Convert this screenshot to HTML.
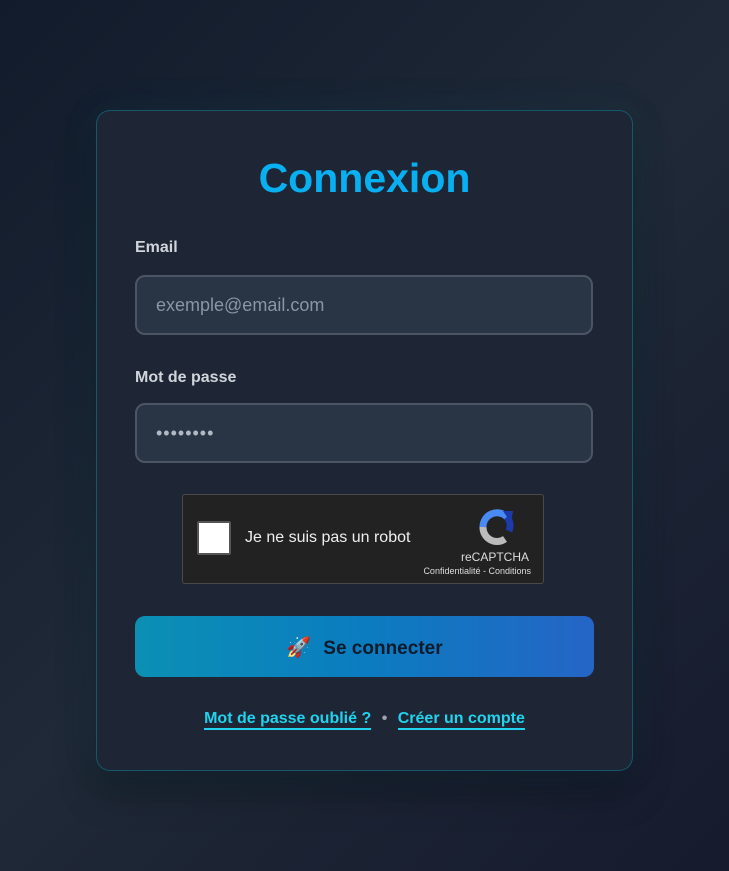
<!DOCTYPE html>
<html><head><meta charset="utf-8"><style>
*{box-sizing:border-box;margin:0;padding:0}
html,body{width:729px;height:871px;overflow:hidden}
body{background:linear-gradient(135deg,#111b2b 0%,#1f2937 50%,#161b2e 100%);font-family:"Liberation Sans",sans-serif;position:relative}
.card{position:absolute;left:96px;top:110px;width:537px;height:661px;border:1px solid rgba(6,182,212,.35);border-radius:14px;background:#1e2635;box-shadow:0 0 40px rgba(6,182,212,.08),0 20px 40px rgba(0,0,0,.3)}
h1{position:absolute;left:0;right:0;top:44px;text-align:center;color:#08b0f2;font-size:41px;font-weight:bold;letter-spacing:0}
.lab{position:absolute;left:38px;color:#d1d5db;font-size:16px;font-weight:bold}
.inp{position:absolute;left:38px;width:458px;height:60px;border:2px solid #4b5563;border-radius:10px;background:#293444;color:#8b95a3;font-size:18px;padding-left:19px;line-height:56px}
.cap{position:absolute;left:85px;top:383px;width:362px;height:90px;background:#222;border:1px solid #4a4a4a;border-radius:3px}
.cb{position:absolute;left:14px;top:26px;width:34px;height:34px;background:#fff;border:2px solid #555;border-radius:2px}
.ct{position:absolute;left:62px;top:34px;color:#eee;font-size:16px}
.btn{position:absolute;left:38px;top:505px;width:459px;height:61px;border-radius:10px;background:linear-gradient(90deg,#0b90b4,#0b7cc0 50%,#2565c6);color:#0f1a2a;font-size:19px;font-weight:bold;text-align:center;line-height:64px}
.links{position:absolute;left:0;right:0;top:599px;text-align:center;color:#22d3ee;font-size:16px;font-weight:bold}
.links span.l{border-bottom:2px solid #22d3ee;padding-bottom:1px}
</style></head><body>
<div class="card">
<h1>Connexion</h1>
<div class="lab" style="top:128px">Email</div>
<div class="inp" style="top:164px">exemple@email.com</div>
<div class="lab" style="top:258px">Mot de passe</div>
<div class="inp" style="top:292px;color:#b0b8c4;letter-spacing:1px">••••••••</div>
<div class="cap"><div class="cb"></div><div class="ct">Je ne suis pas un robot</div>
<svg style="position:absolute;left:294px;top:12px" width="40" height="40" viewBox="0 0 40 40"><path d="M6 20a14 14 0 0 1 24-10" stroke="#4a8af4" stroke-width="7" fill="none"/><path d="M30 10a14 14 0 0 1 2 14" stroke="#1c3aa9" stroke-width="7" fill="none"/><path d="M6 20a14 14 0 0 0 22 12" stroke="#bbb" stroke-width="7" fill="none"/><path d="M26 4l10 0-2 12z" fill="#1c3aa9"/></svg>
<div style="position:absolute;right:14px;top:55px;color:#ddd;font-size:12px">reCAPTCHA</div>
<div style="position:absolute;right:12px;top:71px;color:#ddd;font-size:9px">Confidentialité - Conditions</div></div>
<div class="btn"><span style="font-size:20px;margin-right:12px">🚀</span>Se connecter</div>
<div class="links"><span class="l">Mot de passe oublié ?</span> <span style="color:#9ca3af;margin:0 6px">•</span> <span class="l">Créer un compte</span></div>
</div>
</body></html>
